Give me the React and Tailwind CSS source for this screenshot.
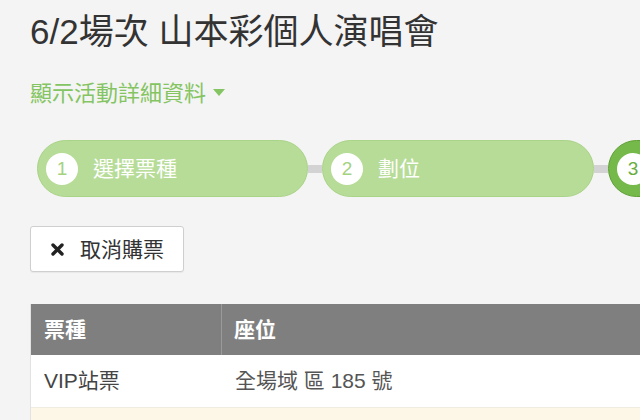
import React from 'react';

const font = { fontFamily: '"Liberation Sans", "Noto Sans CJK TC", sans-serif' };

const Step = ({ num, label, active, className = '' }) => (
  <div
    className={`flex items-center h-[57px] rounded-full border shrink-0 pl-[8px] ${
      active ? 'bg-[#75b94a] border-[#5e9f35]' : 'bg-[#b7dc98] border-[#a9d387]'
    } ${className}`}
  >
    <div className="w-[32px] h-[32px] rounded-full bg-white flex items-center justify-center shrink-0">
      <span className={`text-[19px] leading-none ${active ? 'text-[#6aad3f]' : 'text-[#a4d27f]'}`}>{num}</span>
    </div>
    {label && <span className="ml-[15px] text-[21px] text-white">{label}</span>}
  </div>
);

const Connector = () => <div className="w-[14px] h-[8px] bg-[#d3d3d3] shrink-0" />;

export default function App() {
  return (
    <div className="w-[640px] h-[420px] overflow-hidden bg-[#f4f4f4] text-[#333]" style={font}>
      <div className="pl-[30px] pt-[12px]">
        <h1 className="text-[35px] leading-[40px] font-normal text-[#333] whitespace-nowrap">6/2場次 山本彩個人演唱會</h1>

        <div className="mt-[26px] flex items-center h-[30px] text-[22px] text-[#84c462]">
          <span>顯示活動詳細資料</span>
          <svg className="ml-[7px]" width="12" height="8" viewBox="0 0 12 8">
            <path d="M0 0 L12 0 L6 7 Z" fill="#84c462" />
          </svg>
        </div>

        <div className="mt-[32px] flex items-center pl-[7px] w-[800px]">
          <Step num="1" label="選擇票種" className="w-[271px]" />
          <Connector />
          <Step num="2" label="劃位" className="w-[272px]" />
          <Connector />
          <Step num="3" active className="w-[200px]" />
        </div>

        <button className="mt-[29px] flex items-center h-[46px] w-[154px] pl-[20px] bg-white border border-[#cfcfcf] rounded-[3px] shadow-[0_1px_1px_rgba(0,0,0,0.05)]">
          <svg width="13" height="13" viewBox="0 0 13 13">
            <path d="M2 2 L11 11 M11 2 L2 11" stroke="#222" strokeWidth="3.4" strokeLinecap="round" />
          </svg>
          <span className="ml-[16px] text-[21px] text-[#333] leading-none">取消購票</span>
        </button>

        <div className="mt-[32px] w-[800px] border-l border-[#e2e2e2]">
          <div className="flex h-[51px] bg-[#7f7f7f] text-white text-[21px] font-bold">
            <div className="w-[191px] flex items-center pl-[13px] border-r border-[#9a9a9a]">票種</div>
            <div className="flex-1 flex items-center pl-[12px]">座位</div>
          </div>
          <div className="flex h-[53px] bg-white text-[21px] text-[#444] border-b border-[#f0ece0]">
            <div className="w-[191px] flex items-center pl-[13px]">VIP站票</div>
            <div className="flex-1 flex items-center pl-[13px] text-[#555]">全場域 區 185 號</div>
          </div>
          <div className="h-[53px] bg-[#fcf7e6]" />
        </div>
      </div>
    </div>
  );
}
